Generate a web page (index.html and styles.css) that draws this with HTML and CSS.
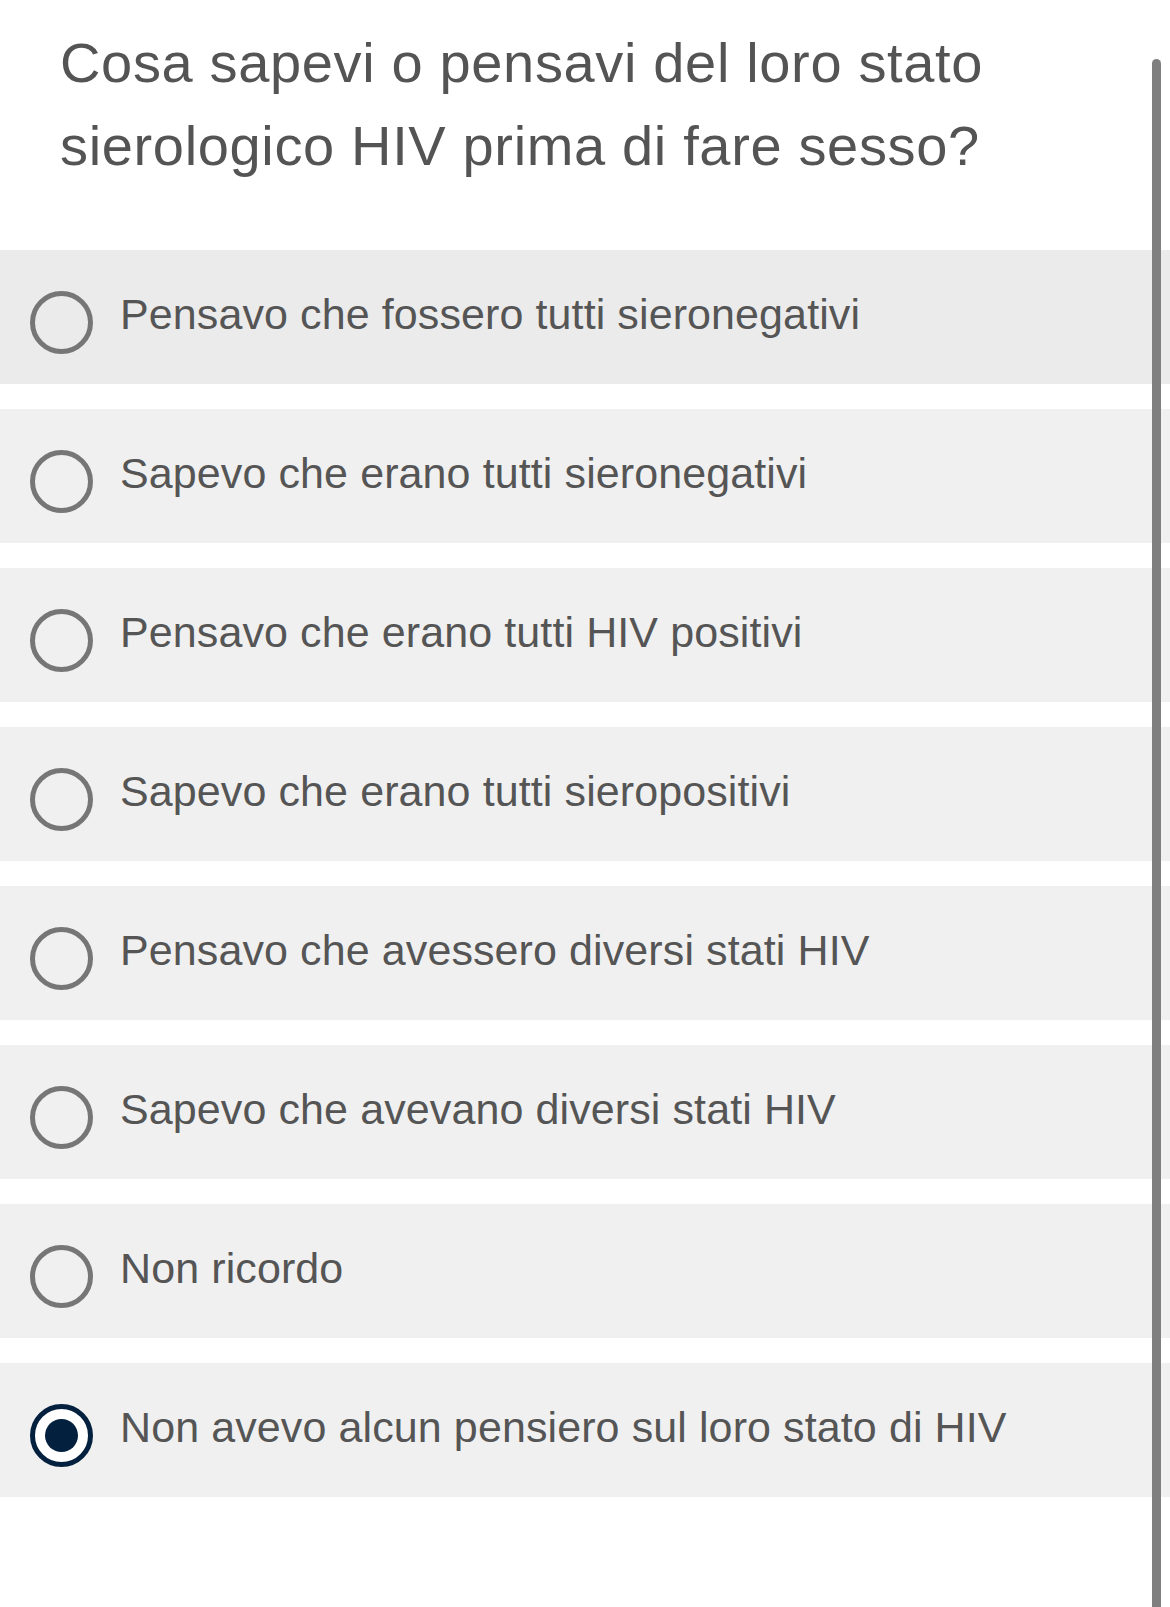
FILE: index.html
```html
<!DOCTYPE html>
<html lang="it">
<head>
<meta charset="utf-8">
<title>Domanda</title>
<link rel="stylesheet" href="styles.css">
</head>
<body>
<main class="survey">
  <h1 class="question">Cosa sapevi o pensavi del loro stato sierologico HIV prima di fare sesso?</h1>
  <div class="options">
    <label class="option option-hover"><span class="radio"></span><span class="label">Pensavo che fossero tutti sieronegativi</span></label>
    <label class="option"><span class="radio"></span><span class="label">Sapevo che erano tutti sieronegativi</span></label>
    <label class="option"><span class="radio"></span><span class="label">Pensavo che erano tutti HIV positivi</span></label>
    <label class="option"><span class="radio"></span><span class="label">Sapevo che erano tutti sieropositivi</span></label>
    <label class="option"><span class="radio"></span><span class="label">Pensavo che avessero diversi stati HIV</span></label>
    <label class="option"><span class="radio"></span><span class="label">Sapevo che avevano diversi stati HIV</span></label>
    <label class="option"><span class="radio"></span><span class="label">Non ricordo</span></label>
    <label class="option"><span class="radio radio-checked"></span><span class="label">Non avevo alcun pensiero sul loro stato di HIV</span></label>
  </div>
</main>
<div class="scrollbar"></div>
</body>
</html>
```
FILE: styles.css
```css
html, body {
  margin: 0;
  padding: 0;
  background: #ffffff;
}
body {
  font-family: "Liberation Sans", Arial, sans-serif;
  color: #555555;
  min-height: 1607px;
}
.survey {
  padding-top: 21px;
}
.question {
  margin: 0 0 63px 0;
  padding: 0 60px 0 60px;
  font-size: 56px;
  line-height: 83px;
  font-weight: 400;
  letter-spacing: 0.65px;
  color: #545454;
}
.options {
  display: flex;
  flex-direction: column;
  gap: 25px;
}
.option {
  display: flex;
  align-items: center;
  height: 134px;
  background: #f0f0f0;
  padding-left: 30px;
  box-sizing: border-box;
}
.option-hover {
  background: #ebebeb;
}
.radio {
  flex: none;
  width: 63px;
  height: 63px;
  box-sizing: border-box;
  border: 5px solid #767676;
  border-radius: 50%;
  margin-top: 10px;
  position: relative;
}
.radio-checked {
  border-color: #04203f;
  background: #ffffff;
}
.radio-checked::after {
  content: "";
  position: absolute;
  left: 10px;
  top: 10px;
  width: 33px;
  height: 33px;
  border-radius: 50%;
  background: #04203f;
}
.label {
  margin-left: 27px;
  font-size: 43px;
  line-height: 1.15;
  padding-bottom: 4px;
  letter-spacing: 0.1px;
  color: #555555;
}
.scrollbar {
  position: absolute;
  left: 1152px;
  top: 59px;
  width: 9px;
  height: 1548px;
  background: #7f7f7f;
  border-radius: 5px 5px 0 0;
}
```
